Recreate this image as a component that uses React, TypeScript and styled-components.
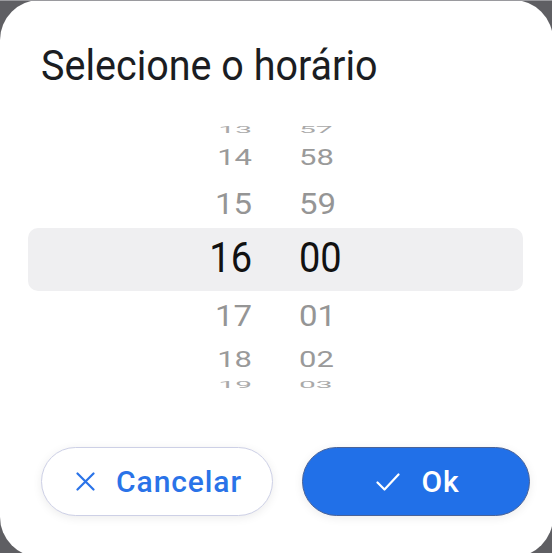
import React from 'react';
import styled, { createGlobalStyle } from 'styled-components';

const GlobalStyle = createGlobalStyle`
  html, body {
    margin: 0;
    padding: 0;
    height: 100%;
    overflow: hidden;
    background: #5f5f63;
  }
  body {
    font-family: Roboto, "Noto Sans", Arial, sans-serif;
  }
`;

const Backdrop = styled.div`
  width: 552px;
  height: 553px;
  overflow: hidden;
  border-top: 1px solid #9a9a9e;
  box-sizing: border-box;
`;

const Dialog = styled.div`
  width: 553px;
  height: 557px;
  margin-top: -1px;
  background: #ffffff;
  border-radius: 40px;
  display: flex;
  flex-direction: column;
  padding-top: 42px;
  box-sizing: border-box;
`;

const Title = styled.h2`
  margin: 0;
  padding-left: 41px;
  font-size: 39.5px;
  line-height: 1.2;
  font-weight: 400;
  color: #1b1d22;
  transform: scaleY(1.06);
  transform-origin: left center;
`;

const Wheel = styled.div`
  margin: 35px 30px 0 28px;
  display: flex;
  flex-direction: column;
`;

const Row = styled.div<{ $h: number; $selected?: boolean }>`
  height: ${p => p.$h}px;
  display: flex;
  justify-content: center;
  align-items: center;
  gap: 47px;
  box-sizing: border-box;
  border-radius: 10px;
  background: ${p => (p.$selected ? '#efeff1' : 'transparent')};
  padding-bottom: ${p => (p.$selected ? 5 : 0)}px;
`;

const Cell = styled.span<{ $size: number; $scale: number; $color: string; $right?: boolean }>`
  width: 80px;
  text-align: ${p => (p.$right ? 'right' : 'left')};
  font-size: ${p => p.$size}px;
  line-height: 1;
  color: ${p => p.$color};
  transform: scaleY(${p => p.$scale});
  white-space: nowrap;
`;

const Footer = styled.div`
  margin-top: 56px;
  padding: 0 20px 0 41px;
  display: flex;
  gap: 29px;
`;

const Button = styled.button<{ $primary?: boolean; $w: number }>`
  width: ${p => p.$w}px;
  height: 69px;
  border-radius: 35px;
  display: flex;
  align-items: center;
  justify-content: center;
  gap: 21px;
  font-family: Roboto, "Noto Sans", Arial, sans-serif;
  font-size: 30px;
  font-weight: 500;
  letter-spacing: 0.9px;
  cursor: pointer;
  box-sizing: border-box;
  background: ${p => (p.$primary ? '#2170e8' : '#ffffff')};
  color: ${p => (p.$primary ? '#ffffff' : '#2a73e8')};
  border: 1.5px solid ${p => (p.$primary ? '#4a6398' : '#cdd0e6')};
  box-shadow: 0 2px 10px rgba(0, 0, 0, 0.08);
  padding: 0 0 0 4px;
`;

const rows = [
  { h: '13', m: '57', height: 12, size: 30, scale: 0.33, color: '#a9a9a9' },
  { h: '14', m: '58', height: 42, size: 31, scale: 0.7, color: '#9a9a9a' },
  { h: '15', m: '59', height: 50, size: 33, scale: 0.87, color: '#959595' },
  { h: '16', m: '00', height: 63, size: 38, scale: 1.12, color: '#111111', selected: true },
  { h: '17', m: '01', height: 48, size: 33, scale: 0.87, color: '#959595' },
  { h: '18', m: '02', height: 40, size: 31, scale: 0.7, color: '#9a9a9a' },
  { h: '19', m: '03', height: 12, size: 30, scale: 0.33, color: '#a9a9a9' },
];

const CloseIcon = () => (
  <svg width="19" height="19" viewBox="0 0 19 19" fill="none">
    <path d="M1.5 1.5 L17.5 17.5 M17.5 1.5 L1.5 17.5" stroke="currentColor" strokeWidth="2.2" strokeLinecap="round" />
  </svg>
);

const CheckIcon = () => (
  <svg width="24" height="20" viewBox="0 0 24 20" fill="none">
    <path d="M1.5 10.5 L8.5 17.5 L22.5 2.5" stroke="currentColor" strokeWidth="2.2" strokeLinecap="round" strokeLinejoin="round" />
  </svg>
);

export default function App() {
  return (
    <>
      <GlobalStyle />
      <Backdrop>
        <Dialog>
          <Title>Selecione o horário</Title>
          <Wheel>
            {rows.map(r => (
              <Row key={r.h} $h={r.height} $selected={r.selected}>
                <Cell $right $size={r.size} $scale={r.scale} $color={r.color}>{r.h}</Cell>
                <Cell $size={r.size} $scale={r.scale} $color={r.color}>{r.m}</Cell>
              </Row>
            ))}
          </Wheel>
          <Footer>
            <Button $w={232}>
              <CloseIcon />
              Cancelar
            </Button>
            <Button $primary $w={228}>
              <CheckIcon />
              Ok
            </Button>
          </Footer>
        </Dialog>
      </Backdrop>
    </>
  );
}
